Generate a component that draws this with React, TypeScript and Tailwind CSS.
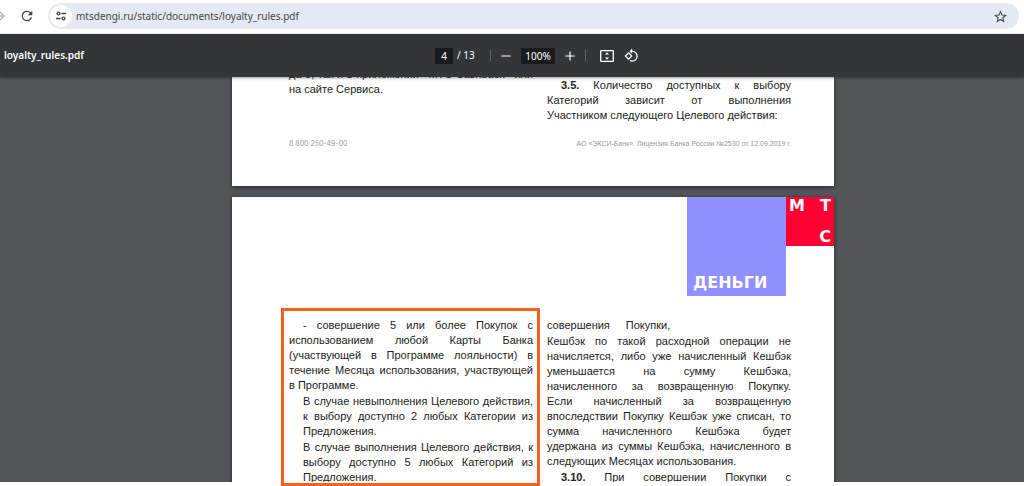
import type { ReactNode } from "react";
import { Minus, Plus } from "lucide-react";

const line = "block whitespace-nowrap";
const justified = "block whitespace-nowrap [text-align-last:justify]";

function Lines({ rows, indent, last }: { rows: ReactNode[]; indent?: boolean; last?: boolean }) {
  return (
    <p>
      {rows.map((row, i) => (
        <span
          key={i}
          className={`${i === rows.length - 1 && !last ? line : justified} ${indent && i === 0 ? "pl-[14px]" : ""}`}
        >
          {row}
        </span>
      ))}
    </p>
  );
}

function AddressBar() {
  return (
    <header className="flex h-[34px] shrink-0 items-center bg-white pr-[5px] pb-[2px] text-[#474747]">
      <button aria-label="Forward" className="w-[19px] text-[#b4b4b4]">
        <svg width="6" height="10" viewBox="0 0 6 10" fill="none" stroke="currentColor" strokeWidth="1.3">
          <path d="M-4 5h8M0 1l4 4-4 4" />
        </svg>
      </button>
      <button aria-label="Reload" className="w-[29px]">
        <svg width="16" height="16" viewBox="0 0 24 24" fill="currentColor">
          <path d="M17.65 6.35A7.96 7.96 0 0 0 12 4a8 8 0 1 0 7.73 10h-2.08A6 6 0 1 1 12 6c1.66 0 3.14.69 4.22 1.78L13 11h7V4z" />
        </svg>
      </button>
      <div className="flex h-[26px] flex-1 items-center rounded-full bg-[#e5e9f3] pr-3 pl-[2px]">
        <button aria-label="Site information" className="flex size-[22px] items-center justify-center rounded-full bg-white">
          <svg width="10" height="10" viewBox="0 0 12 12" fill="none" stroke="currentColor" strokeWidth="1.6">
            <circle cx="3" cy="3" r="1.7" />
            <path d="M6.5 3H12M0 9h5.5" />
            <circle cx="9" cy="9" r="1.7" />
          </svg>
        </button>
        <input
          aria-label="Address"
          className="ml-1 flex-1 bg-transparent font-['Noto_Sans',sans-serif] text-[10px] outline-none"
          defaultValue="mtsdengi.ru/static/documents/loyalty_rules.pdf"
        />
        <button aria-label="Bookmark this page">
          <svg width="13" height="13" viewBox="0 0 24 24" fill="none" stroke="currentColor" strokeWidth="2">
            <path d="M12 3l2.7 6.2 6.8.6-5.1 4.5 1.5 6.6-5.9-3.5-5.9 3.5 1.5-6.6-5.1-4.5 6.8-.6z" />
          </svg>
        </button>
      </div>
    </header>
  );
}

function Toolbar() {
  return (
    <div className="relative z-10 flex h-[43px] shrink-0 items-center bg-[#323639] font-['Noto_Sans',sans-serif] text-[10px] text-white shadow-[0_1px_3px_rgba(0,0,0,0.4)]">
      <h1 className="flex-1 pr-[46px] pl-1 font-semibold">loyalty_rules.pdf</h1>
      <div className="flex items-center">
        <input aria-label="Page" defaultValue="4" className="h-4 w-[18px] bg-[#191b1c] text-center outline-none" />
        <span className="ml-1 w-[18px] whitespace-nowrap">/ 13</span>
        <span className="ml-[15px] h-[11px] w-px bg-[#5f6366]" />
        <button aria-label="Zoom out" className="ml-2">
          <Minus size={14} strokeWidth={2} />
        </button>
        <input aria-label="Zoom" defaultValue="100%" className="ml-2 h-4 w-[34px] bg-[#191b1c] text-center outline-none" />
        <button aria-label="Zoom in" className="ml-2">
          <Plus size={14} strokeWidth={2} />
        </button>
        <span className="ml-2 h-[11px] w-px bg-[#5f6366]" />
        <button aria-label="Fit to page" className="ml-[14px]">
          <svg width="14" height="12" viewBox="0 0 14 12" fill="none" stroke="currentColor" strokeWidth="1.3">
            <rect x="0.7" y="0.7" width="12.6" height="10.6" rx="0.6" />
            <path d="M7 2.2l2 2.3H5zM7 9.8l2-2.3H5z" fill="currentColor" stroke="none" />
          </svg>
        </button>
        <button aria-label="Rotate counterclockwise" className="ml-[10px]">
          <svg width="15" height="15" viewBox="0 0 24 24" fill="currentColor">
            <path d="M7.34 6.41L.86 12.9l6.49 6.48 6.49-6.48-6.5-6.49zM3.69 12.9l3.66-3.66L11 12.9l-3.66 3.66-3.65-3.66zm15.67-6.26A8.95 8.95 0 0 0 13 4V.76L8.76 5 13 9.24V6c1.79 0 3.58.68 4.95 2.05a7.01 7.01 0 0 1 0 9.9 6.97 6.97 0 0 1-7.79 1.44l-1.49 1.49C10.02 21.62 11.51 22 13 22c2.3 0 4.61-.88 6.36-2.64a8.98 8.98 0 0 0 0-12.72z" />
          </svg>
        </button>
      </div>
      <div className="flex-1" />
    </div>
  );
}

function Logo() {
  return (
    <div className="flex justify-end font-['DejaVu_Sans',sans-serif] text-base leading-[16px] font-bold text-white">
      <div className="flex h-[99px] w-[99px] items-end bg-[#9090ff] pb-[5px] pl-[6px]">ДЕНЬГИ</div>
      <div className="grid h-[49px] w-12 grid-cols-2 content-between bg-[#ff0032] px-[3px] py-px">
        <span>М</span>
        <span className="text-right">Т</span>
        <span className="col-start-2 text-right">С</span>
      </div>
    </div>
  );
}

const page = "w-[602px] shrink-0 bg-white shadow-[0_1px_4px_rgba(0,0,0,0.6)]";
const columns = "grid grid-cols-2 gap-[14px] pr-[43px] pl-[57px]";

export default function App() {
  return (
    <div className="flex h-screen flex-col overflow-hidden bg-white">
      <AddressBar />
      <Toolbar />
      <main className="relative min-h-0 flex-1 pb-1">
        <div className="flex h-full flex-col items-center gap-[11px] overflow-hidden bg-[#525659] pl-[42px] font-['Liberation_Sans',sans-serif] text-[11px] leading-[15px] text-[#222]">
          <section className={`${page} h-[109px]`}>
            {/* scrolled partly under the toolbar */}
            <div className={`${columns} -mt-[10px]`}>
              <Lines rows={["да 5, так и в приложении «МТС Cashback» или", "на сайте Сервиса."]} />
              <div className="pt-[11px]">
                <Lines
                  indent
                  rows={[
                    <><b>3.5.</b> Количество доступных к выбору</>,
                    "Категорий зависит от выполнения",
                    "Участником следующего Целевого действия:",
                  ]}
                />
              </div>
            </div>
            <footer className="flex justify-between pt-[13px] pr-[43px] pl-[57px] text-[7px] text-[#999]">
              <span className="font-['Inter',sans-serif]">8 800 250-49-00</span>
              <span>АО «ЭКСИ-Банк». Лицензия Банка России №2530 от 12.09.2019 г.</span>
            </footer>
          </section>
          <section className={page}>
            <Logo />
            <div className={`${columns} pt-[22px]`}>
              <div className="flex flex-col gap-px">
                <Lines
                  indent
                  rows={[
                    "- совершение 5 или более Покупок с",
                    "использованием любой Карты Банка",
                    "(участвующей в Программе лояльности) в",
                    "течение Месяца использования, участвующей",
                    "в Программе.",
                  ]}
                />
                <div className="flex flex-col gap-px pl-[14px]">
                  <Lines
                    rows={["В случае невыполнения Целевого действия,", "к выбору доступно 2 любых Категории из", "Предложения."]}
                  />
                  <Lines
                    rows={["В случае выполнения Целевого действия, к", "выбору доступно 5 любых Категорий из", "Предложения."]}
                  />
                </div>
              </div>
              <div className="flex flex-col gap-px">
                <p className="flex gap-4">
                  <span>совершения</span> <span>Покупки,</span>
                </p>
                <Lines
                  rows={[
                    "Кешбэк по такой расходной операции не",
                    "начисляется, либо уже начисленный Кешбэк",
                    "уменьшается на сумму Кешбэка,",
                    "начисленного за возвращенную Покупку.",
                    "Если начисленный за возвращенную",
                    "впоследствии Покупку Кешбэк уже списан, то",
                    "сумма начисленного Кешбэка будет",
                    "удержана из суммы Кешбэка, начисленного в",
                    "следующих Месяцах использования.",
                  ]}
                />
                <Lines indent last rows={[<><b>3.10.</b> При совершении Покупки с</>]} />
              </div>
            </div>
          </section>
        </div>
        <div className="pointer-events-none absolute inset-0 flex justify-center pl-[42px]">
          <div className="w-[602px] pt-[231px] pl-[49px]">
            <div className="h-full w-[259px] border-[3px] border-[#f26419]" />
          </div>
        </div>
      </main>
    </div>
  );
}
